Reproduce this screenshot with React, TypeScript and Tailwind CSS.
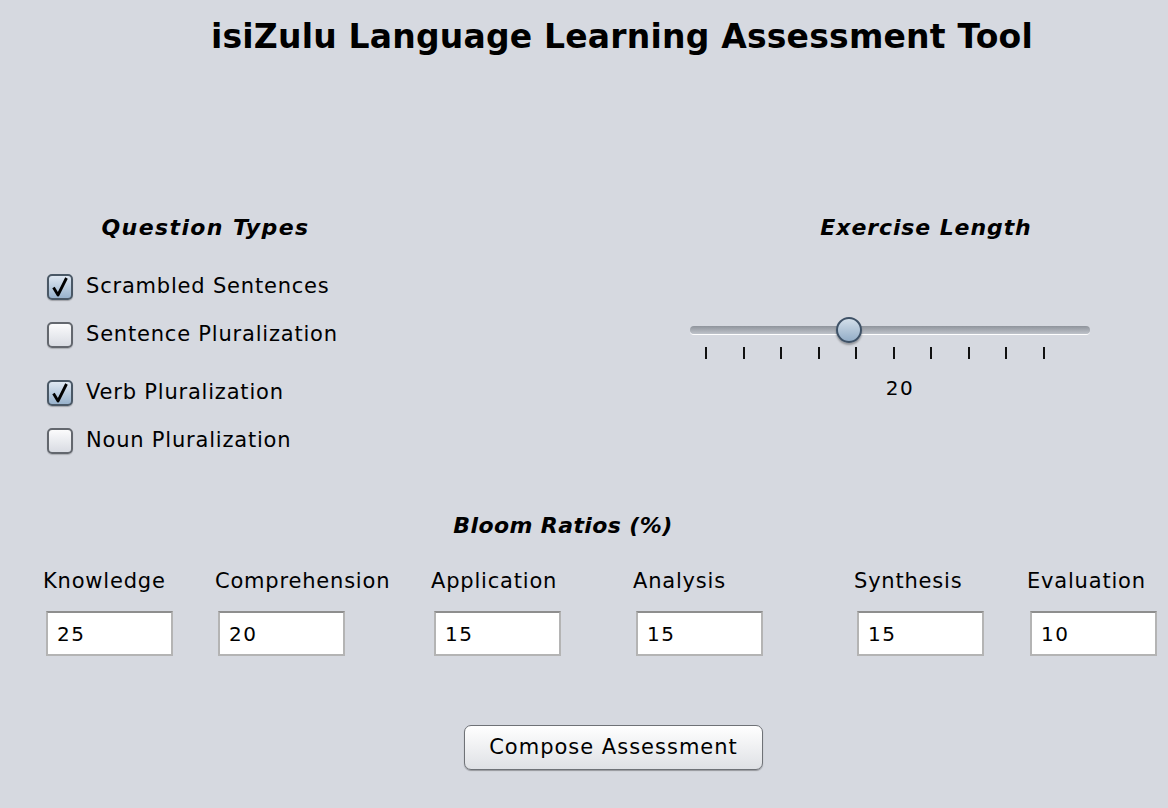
import { useState } from "react";

const font = "font-['DejaVu_Sans','Liberation_Sans',sans-serif]";

const questionTypes = [
    { label: "Scrambled Sentences", checked: true, gap: "mt-0" },
    { label: "Sentence Pluralization", checked: false, gap: "mt-[22px]" },
    { label: "Verb Pluralization", checked: true, gap: "mt-[32px]" },
    { label: "Noun Pluralization", checked: false, gap: "mt-[22px]" },
];

const bloom = [
    { label: "Knowledge", value: "25" },
    { label: "Comprehension", value: "20" },
    { label: "Application", value: "15" },
    { label: "Analysis", value: "15" },
    { label: "Synthesis", value: "15" },
    { label: "Evaluation", value: "10" },
];

const Check = ({ label, checked, onToggle }: { label: string; checked: boolean; onToggle: () => void }) => (
    <button type="button" onClick={onToggle} className="flex items-center h-[26px] text-left">
        <span
            className={
                checked
                    ? "w-[26px] h-[26px] rounded-[5px] border-2 border-[#4a5866] bg-gradient-to-b from-[#dfe8f2] to-[#98b2cc] flex items-center justify-center shadow-[0_1px_1px_rgba(0,0,0,0.25)]"
                    : "w-[26px] h-[26px] rounded-[5px] border-2 border-[#63676e] bg-gradient-to-b from-[#fbfbfc] to-[#d9dce3] shadow-[0_1px_1px_rgba(0,0,0,0.2)]"
            }
        >
            {checked && (
                <svg width="20" height="20" viewBox="0 0 20 20">
                    <path d="M3.5 10.5 L8 18 L16.5 1" fill="none" stroke="#000" strokeWidth="2.8" strokeLinejoin="round" />
                </svg>
            )}
        </span>
        <span className="ml-[13px] text-[21px] tracking-[0.8px] text-black">{label}</span>
    </button>
);

export default function App() {
    const [checks, setChecks] = useState(questionTypes.map((q) => q.checked));

    return (
        <div className={`${font} w-[1168px] h-[808px] bg-[#d6d9e0] text-black flex flex-col overflow-hidden`}>
            <h1 className="pt-[17px] pl-[76px] text-center text-[33px] font-bold leading-[40px] tracking-[0.2px]">
                isiZulu Language Learning Assessment Tool
            </h1>

            <div className="mt-[156px] flex">
                <div className="w-[411px]">
                    <h2 className="text-center text-[22px] font-bold italic leading-[30px] tracking-[1.4px]">Question Types</h2>
                    <div className="mt-[31px] pl-[47px] flex flex-col">
                        {questionTypes.map((q, i) => (
                            <div key={q.label} className={q.gap}>
                                <Check
                                    label={q.label}
                                    checked={checks[i]}
                                    onToggle={() => setChecks(checks.map((c, j) => (j === i ? !c : c)))}
                                />
                            </div>
                        ))}
                    </div>
                </div>

                <div className="ml-[279px] w-[400px]">
                    <h2 className="pl-[72px] text-center text-[22px] font-bold italic leading-[30px] tracking-[0.9px]">Exercise Length</h2>
                    <div className="mt-[83px] relative h-[8px] rounded-full bg-gradient-to-b from-[#8f949c] to-[#bfc3ca] shadow-[0_1px_0_#ffffff]">
                        <div className="absolute left-[146px] top-[-9px] w-[26px] h-[26px] rounded-full border-2 border-[#3e5166] bg-gradient-to-b from-[#d3dfea] to-[#93adc7] shadow-[0_2px_2px_rgba(0,0,0,0.3)]" />
                    </div>
                    <div className="mt-[13px] ml-[15px] w-[340px] flex justify-between">
                        {Array.from({ length: 10 }).map((_, i) => (
                            <span key={i} className="w-[2px] h-[12px] bg-[#111]" />
                        ))}
                    </div>
                    <div className="mt-[16px] pl-[20px] text-center text-[20px] leading-[26px] tracking-[1.5px]">20</div>
                </div>
            </div>

            <h2 className="mt-[57px] pr-[42px] text-center text-[22px] font-bold italic leading-[30px] tracking-[0.4px]">
                Bloom Ratios (%)
            </h2>

            <div className="mt-[27px] pl-[43px] grid grid-cols-[172px_216px_202px_221px_173px_auto]">
                {bloom.map((b) => (
                    <div key={b.label} className="flex flex-col">
                        <span className="text-[21px] leading-[26px] tracking-[0.8px]">{b.label}</span>
                        <input
                            defaultValue={b.value}
                            className="mt-[17px] ml-[3px] w-[127px] h-[45px] bg-white border-2 border-[#b4b4b4] border-t-[#8e8e8e] px-[9px] text-[20px] tracking-[1.5px] outline-none"
                        />
                    </div>
                ))}
            </div>

            <div className="mt-[69px] flex justify-center pl-[59px]">
                <button
                    type="button"
                    className="w-[299px] h-[45px] rounded-[7px] border border-[#6f7277] bg-gradient-to-b from-[#ffffff] to-[#dfe1e5] text-[21px] tracking-[1px] shadow-[0_1px_1px_rgba(0,0,0,0.3)]"
                >
                    Compose Assessment
                </button>
            </div>
        </div>
    );
}
